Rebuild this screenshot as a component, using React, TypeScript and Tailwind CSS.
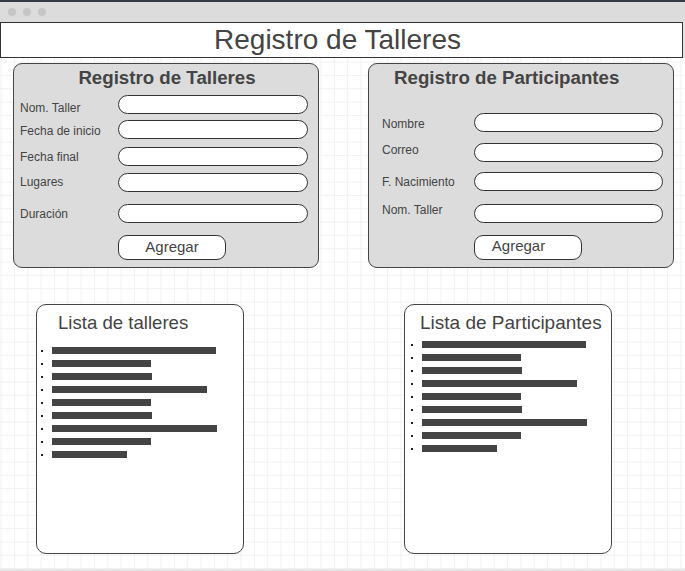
import React from "react";

const barWidths = [164, 99, 100, 155, 99, 100, 165, 99, 75];

function Field({
  label,
  labelClass = "",
  rowClass = "",
  labelWidth,
  inputWidth,
}: {
  label: string;
  labelClass?: string;
  rowClass?: string;
  labelWidth: string;
  inputWidth: string;
}) {
  return (
    <div className={`flex items-center h-[19px] ${rowClass}`}>
      <span className={`${labelWidth} shrink-0 text-[12px] leading-[14px] text-[#444] ${labelClass}`}>{label}</span>
      <div className={`${inputWidth} h-[19px] rounded-full border border-[#333] bg-white`} />
    </div>
  );
}

function AddButton({ className = "" }: { className?: string }) {
  return (
    <div
      className={`w-[108px] h-[25px] rounded-[9px] border border-[#333] bg-white flex items-center justify-center text-[15px] text-[#444] ${className}`}
    >
      Agregar
    </div>
  );
}

function BarList({ className = "", bulletGap }: { className?: string; bulletGap: string }) {
  return (
    <ul className={`flex flex-col ${className}`}>
      {barWidths.map((w, i) => (
        <li key={i} className="flex items-center h-[13px]">
          <span className={`w-[2px] h-[2px] bg-[#222] ${bulletGap}`} />
          <span className="h-[7px] bg-[#444]" style={{ width: w }} />
        </li>
      ))}
    </ul>
  );
}

export default function App() {
  return (
    <div className="w-[685px] h-[571px] flex flex-col bg-white overflow-hidden font-['Liberation_Sans',Arial,sans-serif]">
      {/* window chrome */}
      <div className="h-[2px] bg-[#353b44]" />
      <div className="h-[20px] bg-[#dcdcdc] flex items-center gap-[7px] pl-[8px]">
        <span className="w-[8px] h-[8px] rounded-full bg-[#c6c6c6]" />
        <span className="w-[8px] h-[8px] rounded-full bg-[#c6c6c6]" />
        <span className="w-[8px] h-[8px] rounded-full bg-[#c6c6c6]" />
      </div>

      <div className="flex">
        <div className="w-[683px] h-[36px] border border-[#333] bg-white flex items-center justify-center pr-[8px] pb-[1px] text-[28px] text-[#444] leading-none">
          Registro de Talleres
        </div>
        <div className="w-[2px] bg-[#e4e4e4]" />
      </div>

      {/* canvas */}
      <div className="flex-1 flex flex-col bg-white bg-[linear-gradient(to_right,#f1f1f1_1px,transparent_1px),linear-gradient(to_bottom,#f1f1f1_1px,transparent_1px)] bg-[size:13.333px_13.333px] bg-[position:0.67px_3.67px] border-b-2 border-[#e6e6e6]">
        <div className="flex mt-[5px] ml-[13px] gap-[49px]">
          {/* Registro de Talleres */}
          <div className="w-[306px] h-[205px] rounded-[9px] border border-[#444] bg-[#dcdcdc] flex flex-col pt-[3px] pl-[6px]">
            <h2 className="text-[18.7px] leading-[22px] font-bold text-[#444] text-center pr-[4px]">Registro de Talleres</h2>
            <div className="flex flex-col mt-[6px]">
              <Field label="Nom. Taller" labelClass="mt-[6px]" labelWidth="w-[98px]" inputWidth="w-[190px]" />
              <Field label="Fecha de inicio" labelClass="mt-[3px]" rowClass="mt-[6px]" labelWidth="w-[98px]" inputWidth="w-[190px]" />
              <Field label="Fecha final" rowClass="mt-[8px]" labelWidth="w-[98px]" inputWidth="w-[190px]" />
              <Field label="Lugares" labelClass="mb-[2px]" rowClass="mt-[7px]" labelWidth="w-[98px]" inputWidth="w-[190px]" />
              <Field label="Duración" rowClass="mt-[12px]" labelWidth="w-[98px]" inputWidth="w-[190px]" />
            </div>
            <AddButton className="mt-[12px] ml-[98px]" />
          </div>

          {/* Registro de Participantes */}
          <div className="w-[306px] h-[205px] rounded-[9px] border border-[#444] bg-[#dcdcdc] flex flex-col pt-[3px]">
            <h2 className="text-[18.7px] leading-[22px] font-bold text-[#444] pl-[25px]">Registro de Participantes</h2>
            <div className="flex flex-col mt-[24px] pl-[13px]">
              <Field label="Nombre" labelClass="mt-[3px]" labelWidth="w-[92px]" inputWidth="w-[189px]" />
              <Field label="Correo" labelClass="mb-[5px]" rowClass="mt-[11px]" labelWidth="w-[92px]" inputWidth="w-[189px]" />
              <Field label="F. Nacimiento" rowClass="mt-[10px]" labelWidth="w-[92px]" inputWidth="w-[189px]" />
              <Field label="Nom. Taller" labelClass="mb-[7px]" rowClass="mt-[13px]" labelWidth="w-[92px]" inputWidth="w-[189px]" />
            </div>
            <AddButton className="mt-[12px] ml-[105px] pr-[19px] pb-[2px]" />
          </div>
        </div>

        <div className="flex mt-[36px] ml-[36px] gap-[160px]">
          {/* Lista de talleres */}
          <div className="w-[208px] h-[250px] rounded-[10px] border border-[#444] bg-white flex flex-col pt-[7px]">
            <h3 className="text-[18.6px] leading-[22px] text-[#444] pl-[21px]">Lista de talleres</h3>
            <BarList className="mt-[10px] pl-[4px]" bulletGap="mr-[9px]" />
          </div>

          {/* Lista de Participantes */}
          <div className="w-[208px] h-[250px] rounded-[10px] border border-[#444] bg-white flex flex-col pt-[7px]">
            <h3 className="text-[19px] leading-[22px] text-[#444] pl-[15px]">Lista de Participantes</h3>
            <BarList className="mt-[4px] pl-[6px]" bulletGap="mr-[9px]" />
          </div>
        </div>
      </div>
    </div>
  );
}
